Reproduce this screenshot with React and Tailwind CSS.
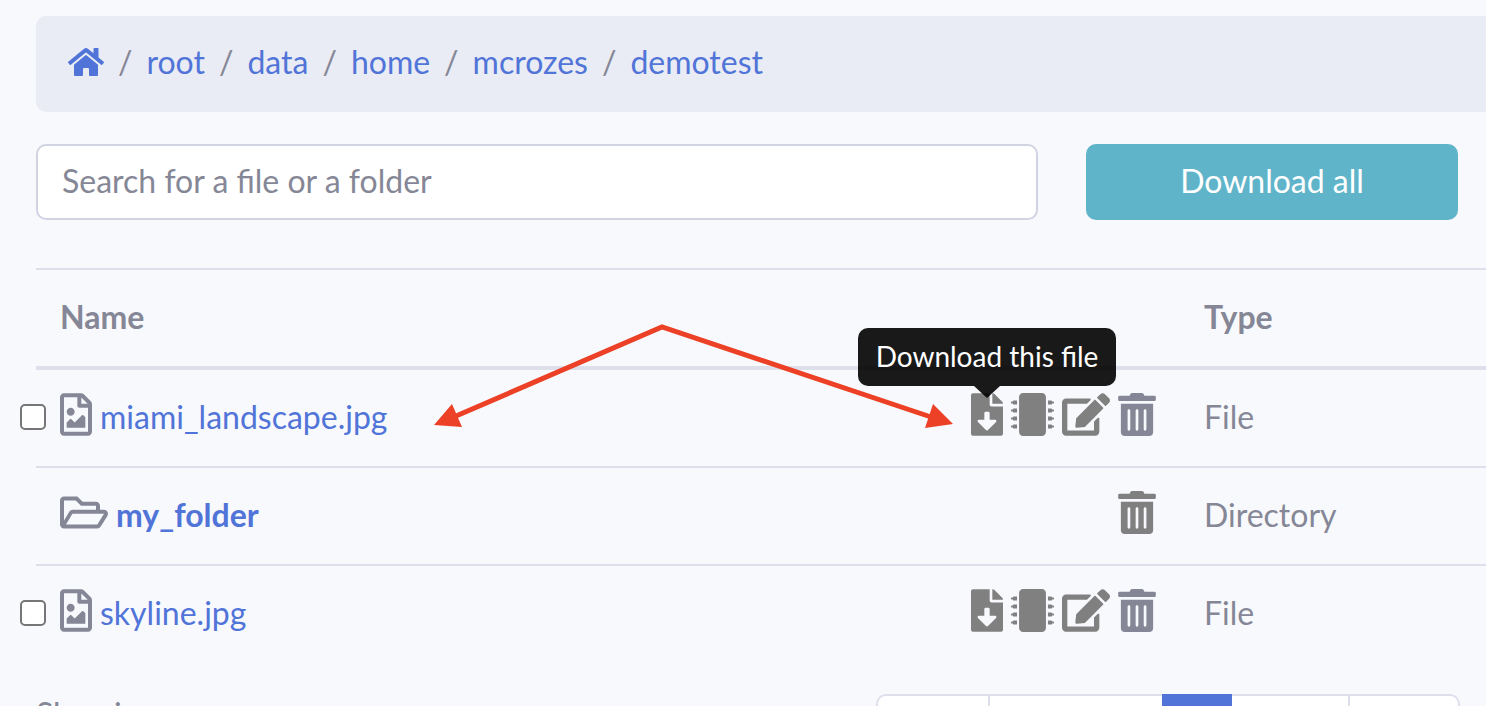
import { Fragment } from "react";
import {
  FaEdit,
  FaFileDownload,
  FaHome,
  FaMicrochip,
  FaRegFileImage,
  FaRegFolderOpen,
  FaTrashAlt,
} from "react-icons/fa";

const crumbs = ["root", "data", "home", "mcrozes", "demotest"];

const entries = [
  { name: "miami_landscape.jpg", type: "File", hinted: true },
  { name: "my_folder", type: "Directory" },
  { name: "skyline.jpg", type: "File" },
];

const pages = [
  { label: "First", style: "w-[114px] rounded-l-[10px] border-l-2 border-r-2" },
  { label: "Previous", style: "w-[172px]" },
  { label: "1", style: "w-[70px] !border-[#5174d8] !bg-[#5174d8] text-white" },
  { label: "Next", style: "w-[118px] border-r-2" },
  { label: "Last", style: "w-[110px] rounded-r-[10px] border-r-2" },
];

function Breadcrumb() {
  return (
    <nav
      aria-label="Breadcrumb"
      className="flex items-center gap-3.5 rounded-l-[10px] bg-[#e9ecf4] px-8 pt-[22px] pb-[26px]"
    >
      <a href="#home" aria-label="Home" className="text-[#5174d8]">
        <FaHome className="h-8 w-9" />
      </a>
      {crumbs.map((crumb) => (
        <Fragment key={crumb}>
          <span aria-hidden="true">/</span>
          <a href={`#${crumb}`} className="text-[#5174d8]">
            {crumb}
          </a>
        </Fragment>
      ))}
    </nav>
  );
}

function Tooltip({ children }) {
  return (
    <span
      role="tooltip"
      className="absolute bottom-[38px] left-1/2 flex -translate-x-1/2 flex-col items-center"
    >
      <span className="flex h-[58px] w-[258px] items-center justify-center rounded-[10px] bg-black/90 pb-0.5 text-[28px] leading-[42px] whitespace-nowrap text-white">
        {children}
      </span>
      <svg viewBox="0 0 26 12" className="h-3 w-[26px] fill-black/90" aria-hidden="true">
        <path d="M0 0H26L13 12Z" />
      </svg>
    </span>
  );
}

function Actions({ entry }) {
  const isFile = entry.type === "File";
  return (
    <div className="flex items-center gap-2 text-[#808080]">
      {isFile && (
        <>
          <button type="button" aria-label={`Download ${entry.name}`} className="relative">
            <FaFileDownload className="h-[43px] w-8" />
            {entry.hinted && <Tooltip>Download this file</Tooltip>}
          </button>
          <button type="button" aria-label={`Process ${entry.name}`}>
            <FaMicrochip className="size-[43px]" />
          </button>
          <button type="button" aria-label={`Edit ${entry.name}`}>
            <FaEdit className="h-[43px] w-12" />
          </button>
        </>
      )}
      <button
        type="button"
        aria-label={`Delete ${entry.name}`}
        className={isFile ? "text-[#858796]" : ""}
      >
        <FaTrashAlt className="h-[43px] w-[38px]" />
      </button>
    </div>
  );
}

function EntryRow({ entry, last }) {
  const isFile = entry.type === "File";
  const line = last ? "h-24" : "h-[98px] border-b-2 border-[#dddfea]";
  return (
    <tr>
      <td className={`px-6 ${line}`}>
        <div className="flex items-center justify-between pb-2">
          <div className="flex items-center">
            {isFile && (
              <input
                type="checkbox"
                aria-label={`Select ${entry.name}`}
                className="mt-1.5 mr-3.5 -ml-10 size-[26px] appearance-none rounded-[5px] border-2 border-[#767676] bg-white"
              />
            )}
            {isFile ? (
              <FaRegFileImage className="mr-2 h-[43px] w-8" />
            ) : (
              <FaRegFolderOpen className="mr-2 h-[43px] w-12" />
            )}
            <a
              href={`#${entry.name}`}
              className={`pt-1.5 text-[#5174d8] ${isFile ? "" : "font-bold"}`}
            >
              {entry.name}
            </a>
          </div>
          <Actions entry={entry} />
        </div>
      </td>
      <td className={`px-6 pb-0.5 ${line}`}>{entry.type}</td>
    </tr>
  );
}

function Arrows() {
  return (
    <svg
      viewBox="0 0 520 104"
      className="pointer-events-none absolute top-[324px] left-[434px] h-[104px] w-[520px]"
      aria-hidden="true"
    >
      <path d="M22 92L228 3L497 93" fill="none" stroke="#ec4126" strokeWidth="5" />
      <path d="M0 101L18 80L28 103Z M519 100L499 80L491 104Z" fill="#ec4126" />
    </svg>
  );
}

export default function App() {
  return (
    <div className="relative h-screen overflow-hidden bg-[#f8f9fd] pt-4 pl-9 font-['Lato',sans-serif] text-[32px] leading-[48px] text-[#858796]">
      <Breadcrumb />
      <form className="mt-8 mr-7 flex gap-12">
        <input
          type="text"
          aria-label="Search for a file or a folder"
          placeholder="Search for a file or a folder"
          className="h-[76px] min-w-0 flex-1 rounded-[10px] border-2 border-[#d1d3e2] bg-white px-6 pb-1 placeholder:text-[#858796]"
        />
        <button
          type="button"
          className="h-[76px] w-[372px] rounded-[10px] bg-[#5fb4c9] pb-0.5 text-white"
        >
          Download all
        </button>
      </form>
      <table className="mt-12 w-full table-fixed border-separate border-spacing-0 text-left">
        <thead>
          <tr>
            <th className="h-[102px] border-t-2 border-b-4 border-[#dddfea] px-6 pb-0.5">Name</th>
            <th className="w-[306px] border-t-2 border-b-4 border-[#dddfea] px-6 pb-0.5">Type</th>
          </tr>
        </thead>
        <tbody>
          {entries.map((entry, i) => (
            <EntryRow key={entry.name} entry={entry} last={i === entries.length - 1} />
          ))}
        </tbody>
      </table>
      <footer className="mt-7 mr-[26px] flex items-start justify-between">
        <p>Showing</p>
        <nav aria-label="Pagination" className="flex pt-1">
          {pages.map((page) => (
            <button
              key={page.label}
              type="button"
              className={`h-[76px] border-y-2 border-[#dddfea] bg-white ${page.style}`}
            >
              {page.label}
            </button>
          ))}
        </nav>
      </footer>
      <Arrows />
    </div>
  );
}
